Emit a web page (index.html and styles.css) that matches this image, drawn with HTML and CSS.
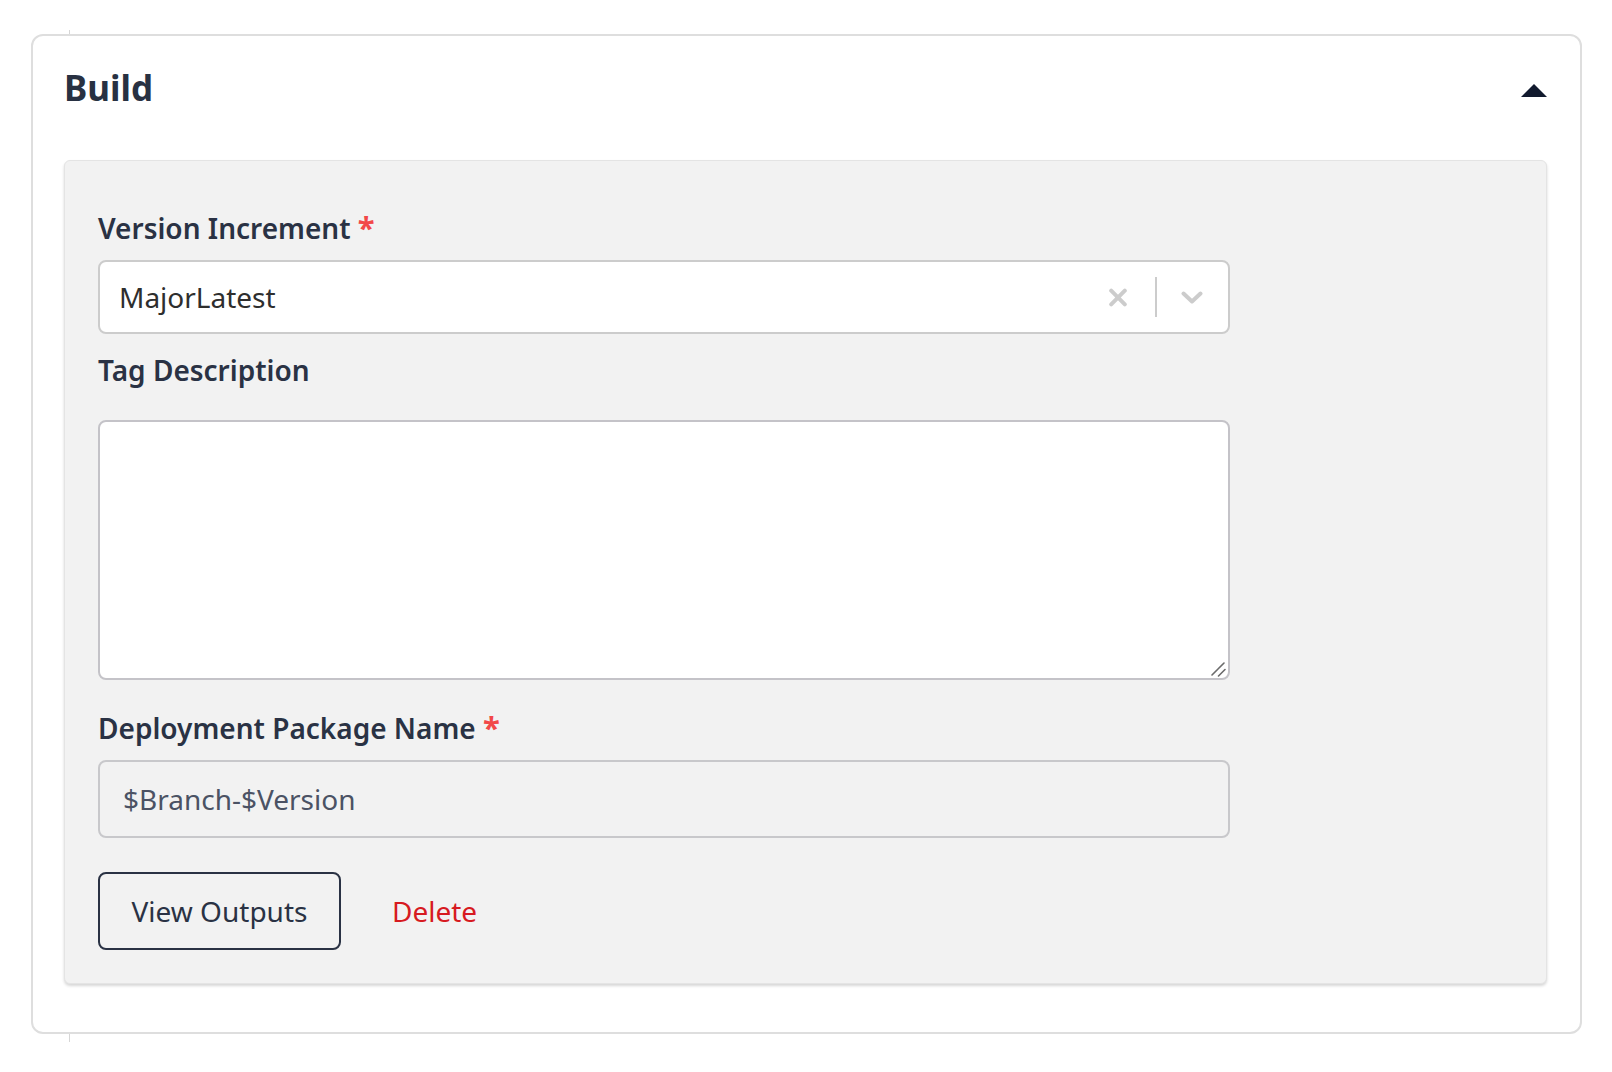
FILE: index.html
```html
<!DOCTYPE html>
<html lang="en">
<head>
<meta charset="utf-8">
<title>Build</title>
<link rel="stylesheet" href="styles.css">
</head>
<body>
<div class="page">
  <div class="rail"></div>
  <section class="card">
    <header class="card-head">
      <h2 class="title">Build</h2>
      <button class="toggle" type="button" aria-label="Collapse">
        <svg width="26" height="13" viewBox="0 0 26 13"><polygon points="13,0 26,13 0,13" fill="#111a2e"/></svg>
      </button>
    </header>
    <div class="panel">
      <div class="field">
        <label class="label">Version Increment <span class="req">*</span></label>
        <div class="select">
          <span class="select-value">MajorLatest</span>
          <span class="clear">
            <svg width="18" height="19" viewBox="0 0 18 19"><path d="M2.2 2.7 L15.8 16.3 M15.8 2.7 L2.2 16.3" stroke="#cccccc" stroke-width="4" stroke-linecap="round" fill="none"/></svg>
          </span>
          <span class="sep"></span>
          <span class="chev">
            <svg width="22" height="13" viewBox="0 0 22 13"><polyline points="2.5,2.5 11,10.5 19.5,2.5" stroke="#cccccc" stroke-width="4" stroke-linecap="round" stroke-linejoin="round" fill="none"/></svg>
          </span>
        </div>
      </div>
      <div class="field field-tag">
        <label class="label">Tag Description</label>
        <div class="textarea-wrap">
          <textarea class="textarea"></textarea>
          <svg class="grip" width="16" height="16" viewBox="0 0 16 16"><path d="M2 14 L14 2 M8.5 15 L15 8.5" stroke="#6b6b6b" stroke-width="1.6" stroke-linecap="round" fill="none"/></svg>
        </div>
      </div>
      <div class="field field-pkg">
        <label class="label">Deployment Package Name <span class="req">*</span></label>
        <input class="input" type="text" value="$Branch-$Version" disabled>
      </div>
      <div class="actions">
        <button class="btn-outline" type="button">View Outputs</button>
        <button class="btn-link" type="button">Delete</button>
      </div>
    </div>
  </section>
</div>
</body>
</html>
```
FILE: styles.css
```css
* { box-sizing: border-box; }
html, body { margin: 0; padding: 0; background: #ffffff; }
body { font-family: "Noto Sans", "Open Sans", sans-serif; color: #2a3244; }

.page {
  position: relative;
  padding: 34px 0 40px 31px;
}
.rail {
  position: absolute;
  left: 69px;
  top: 30px;
  width: 1px;
  height: 1012px;
  background: #d6d6d6;
}
.card {
  position: relative;
  z-index: 1;
  width: 1551px;
  background: #ffffff;
  border: 2px solid #dedede;
  border-radius: 12px;
  padding: 31px 33px 48px 31px;
}
.card-head {
  display: flex;
  justify-content: space-between;
  align-items: flex-start;
  height: 42px;
}
.title {
  margin: 0;
  font-size: 35px;
  line-height: 42px;
  font-weight: 700;
  color: #283142;
}
.toggle {
  margin: 17px 0 0 0;
  padding: 0;
  border: 0;
  background: none;
  display: block;
  line-height: 0;
}
.panel {
  margin-top: 51px;
  background: #f2f2f2;
  border: 1px solid #e4e4e4;
  border-radius: 6px;
  box-shadow: 0 2px 3px rgba(0, 0, 0, 0.16);
  padding: 47px 0 33px 33px;
}
.field { width: 1132px; display: flex; flex-direction: column; }
.label {
  font-size: 28px;
  line-height: 40px;
  font-weight: 600;
  color: #2a3244;
  margin: 0 0 12px 0;
}
.req {
  color: #f24848;
  font-weight: 700;
  font-size: 31px;
  line-height: 0;
}

.select {
  height: 74px;
  background: #ffffff;
  border: 2px solid #cccccc;
  border-radius: 8px;
  display: flex;
  align-items: center;
  padding: 0 25px 0 19px;
}
.select-value {
  flex: 1;
  font-size: 28px;
  line-height: 40px;
  color: #2e2e2e;
}
.clear { display: block; line-height: 0; }
.sep {
  display: block;
  width: 2px;
  height: 40px;
  background: #cccccc;
  margin: 0 24px 0 28px;
}
.chev { display: block; line-height: 0; }

.field-tag { margin-top: 16px; }
.field-tag .label { margin-bottom: 30px; }
.textarea-wrap { position: relative; width: 1132px; height: 260px; }
.textarea {
  display: block;
  width: 1132px;
  height: 260px;
  background: #ffffff;
  border: 2px solid #c4c3c8;
  border-radius: 8px;
  resize: none;
  font-family: inherit;
  font-size: 28px;
  padding: 12px 20px;
  outline: none;
}
.grip {
  position: absolute;
  right: 4px;
  bottom: 3px;
  pointer-events: none;
}

.field-pkg { margin-top: 28px; }
.input {
  height: 78px;
  width: 1132px;
  background: #f2f2f2;
  border: 2px solid #c8c8cb;
  border-radius: 8px;
  padding: 0 23px;
  font-family: inherit;
  font-size: 28px;
  color: #4b5264;
  -webkit-text-fill-color: #4b5264;
  opacity: 1;
  outline: none;
}

.actions {
  margin-top: 34px;
  display: flex;
  align-items: center;
}
.btn-outline {
  width: 243px;
  height: 78px;
  background: transparent;
  border: 2px solid #2a3244;
  border-radius: 8px;
  font-family: inherit;
  font-size: 28px;
  color: #2a3244;
  padding: 0;
}
.btn-link {
  margin-left: 51px;
  background: none;
  border: 0;
  padding: 0;
  font-family: inherit;
  font-size: 28px;
  color: #d71a21;
}
```
